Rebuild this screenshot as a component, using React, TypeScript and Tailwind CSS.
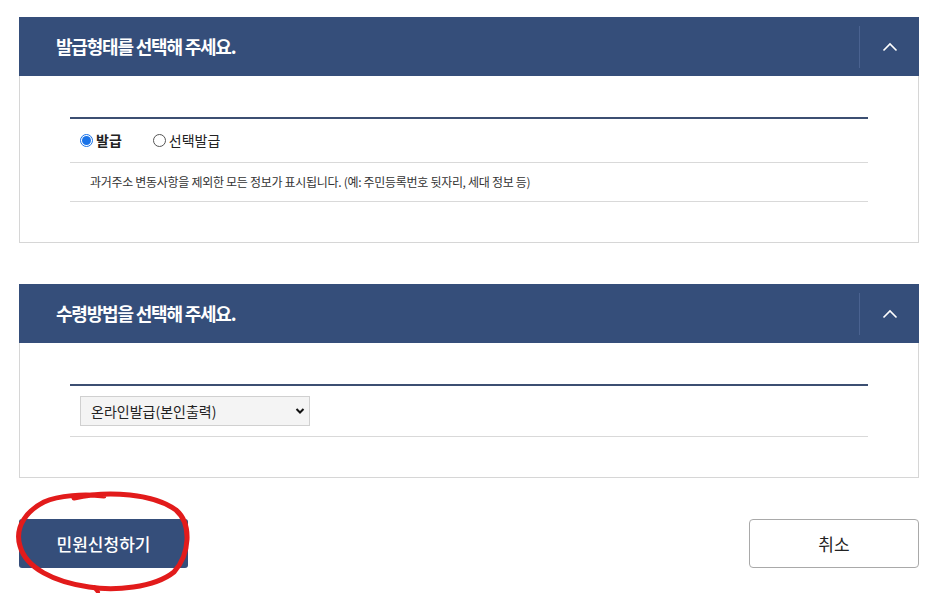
import React from "react";

const FONT = { fontFamily: '"Noto Sans CJK KR", "Noto Sans", sans-serif' };

function Chevron() {
  return (
    <svg width="16" height="10" viewBox="0 0 16 10" fill="none">
      <path d="M1.5 8.5 L8 2 L14.5 8.5" stroke="#ffffff" strokeWidth="1.6" />
    </svg>
  );
}

function PanelHeader({ title }: { title: string }) {
  return (
    <div className="flex h-[59px] items-center bg-[#354e7a]">
      <div className="flex-1 pl-[37px] text-[18px] font-bold tracking-[-1.2px] text-white">{title}</div>
      <div className="h-[42px] w-px bg-[#4a6290]" />
      <div className="flex h-full w-[59px] items-center justify-center">
        <Chevron />
      </div>
    </div>
  );
}

export default function App() {
  return (
    <div className="relative min-h-[593px] bg-white px-[19px] pt-[17px]" style={FONT}>
      <div>
        <PanelHeader title="발급형태를 선택해 주세요." />
        <div className="border border-t-0 border-[#d6d6d6] px-[50px] pt-[41px] pb-[40px]">
          <div className="border-t-2 border-[#3c4f72]">
            <div className="flex h-[44px] items-center border-b border-[#d9d9d9] pl-[10px] text-[14px] text-[#222]">
              <label className="flex items-center">
                <span className="flex h-[13px] w-[13px] items-center justify-center rounded-full border border-[#1a73e8]">
                  <span className="h-[9px] w-[9px] rounded-full bg-[#1a73e8]" />
                </span>
                <span className="ml-[3px] font-bold">발급</span>
              </label>
              <label className="ml-[31px] flex items-center">
                <span className="h-[13px] w-[13px] rounded-full border border-[#555]" />
                <span className="ml-[3px]">선택발급</span>
              </label>
            </div>
            <div className="flex h-[39px] items-center border-b border-[#d9d9d9] pl-[20px] text-[12px] tracking-[-0.3px] text-[#333]">
              과거주소 변동사항을 제외한 모든 정보가 표시됩니다. (예: 주민등록번호 뒷자리, 세대 정보 등)
            </div>
          </div>
        </div>
      </div>

      <div className="mt-[41px]">
        <PanelHeader title="수령방법을 선택해 주세요." />
        <div className="border border-t-0 border-[#d6d6d6] px-[50px] pt-[41px] pb-[40px]">
          <div className="border-t-2 border-[#3c4f72]">
            <div className="flex h-[51px] items-center border-b border-[#d9d9d9] pl-[10px]">
              <div className="flex h-[30px] w-[230px] items-center justify-between border border-[#d0d0d0] bg-[#f4f4f4] pl-[10px] pr-[4px] text-[14px] text-[#222]">
                <span>온라인발급(본인출력)</span>
                <svg width="10" height="8" viewBox="0 0 10 8" fill="none">
                  <path d="M1.5 2 L5 5.5 L8.5 2" stroke="#111" strokeWidth="2" />
                </svg>
              </div>
            </div>
          </div>
        </div>
      </div>

      <div className="mt-[41px] flex items-center justify-between">
        <button className="h-[49px] w-[169px] rounded-[3px] bg-[#354e7a] text-[17px] font-medium text-white">
          민원신청하기
        </button>
        <button className="h-[49px] w-[170px] rounded-[4px] border border-[#a9a9a9] bg-white text-[17px] text-[#222]">
          취소
        </button>
      </div>

      <svg
        className="pointer-events-none absolute left-[14px] top-[488px]"
        width="180"
        height="105"
        viewBox="0 0 180 105"
        fill="none"
      >
        <path
          d="M60 10 C95 2 140 6 162 22 C178 36 176 66 160 84 C140 100 100 103 75 99 C40 94 12 80 6 58 C0 38 14 22 30 14 C45 7 70 6 90 8"
          stroke="#e21b1b"
          strokeWidth="5"
          strokeLinecap="round"
        />
        <path d="M80 99 L84 104" stroke="#e21b1b" strokeWidth="4" strokeLinecap="round" />
      </svg>
    </div>
  );
}
